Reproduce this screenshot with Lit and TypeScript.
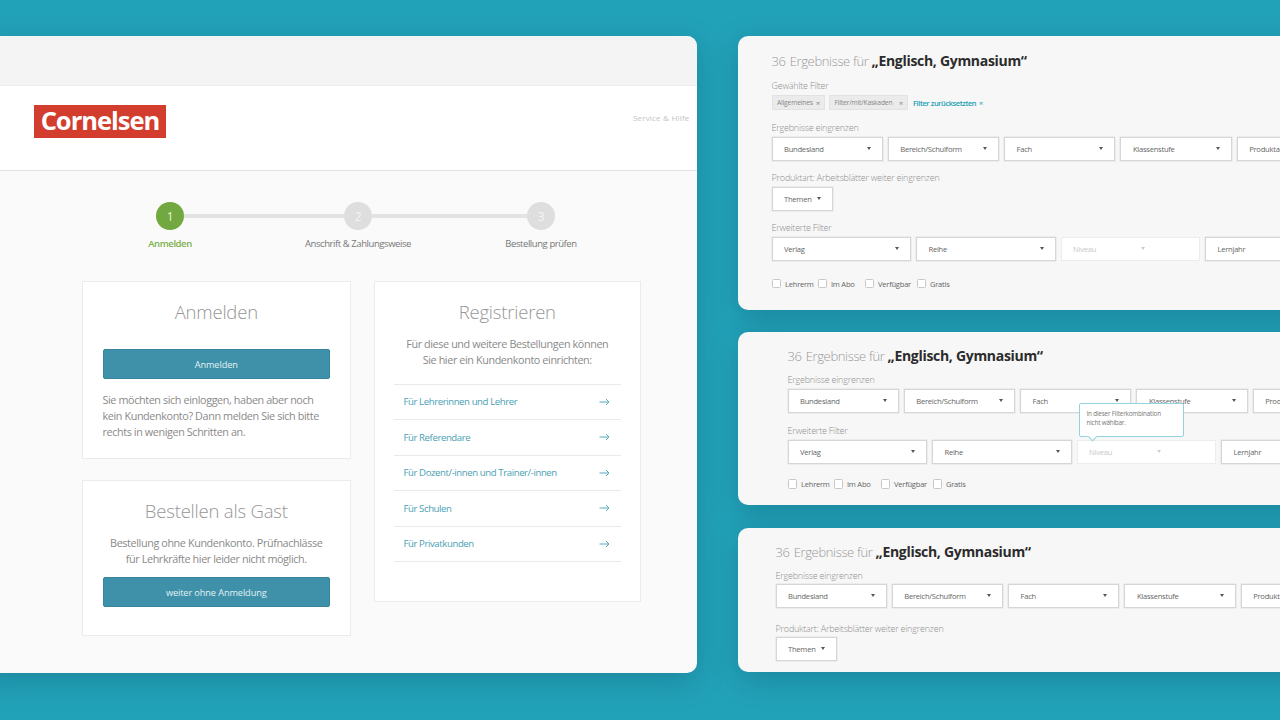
import { LitElement, html, css } from "lit";
import { customElement } from "lit/decorators.js";

const arrow = () => html`<svg class="arrow" width="11" height="8" viewBox="0 0 11 8" fill="none" stroke="currentColor" stroke-width="1"><path d="M0.5 4H10M7 1l3 3-3 3"/></svg>`;

@customElement("app-root")
export class AppRoot extends LitElement {
  static styles = css`
    :host { display: block; position: relative; width: 1280px; height: 720px; overflow: hidden; background: #22a2b9; font-family: "Open Sans", "Noto Sans", sans-serif; color: #666; letter-spacing: -.25px; }
    * { box-sizing: border-box; }
    .panel { position: absolute; overflow: hidden; background: #f7f7f7; box-shadow: 0 8px 30px rgba(0,40,60,.22); white-space: nowrap; }
    .shop { left: -20px; top: 36px; width: 716.5px; height: 636.5px; border-radius: 10px; background: #fafafa; padding-left: 20px; }
    .topband { height: 50px; margin-left: -20px; background: #f4f4f4; border-bottom: 1px solid #eee; }
    .header { height: 85px; margin-left: -20px; padding: 19px 7px 0 54px; background: #fff; border-bottom: 1px solid #e2e2e2; display: flex; justify-content: space-between; align-items: flex-start; }
    .logo { width: 132px; height: 33px; background: #d33d2d; color: #fff; font: 700 25.5px/31px "Open Sans", sans-serif; letter-spacing: -1px; text-align: center; }
    .service { margin-top: 7px; font-size: 8px; letter-spacing: .2px; color: #c4c4c4; }
    .stepper { display: grid; grid-template-columns: 28px 160px 28px 155px 28px; grid-template-rows: 28px auto; margin: 31px 0 0 156px; width: 399px; align-items: center; justify-items: center; }
    .dot { width: 28px; height: 28px; border-radius: 50%; background: #dedede; color: #f4f4f4; font-size: 12px; display: flex; align-items: center; justify-content: center; }
    .dot.on { background: #71a83f; color: #e8f2dd; }
    .line { width: 100%; height: 4px; background: #e3e3e3; }
    .slabel { font-size: 9.5px; margin-top: 7px; color: #777; line-height: 14px; letter-spacing: -.43px; }
    .slabel.on { color: #7cb04c; font-weight: 600; }
    .cols { display: flex; gap: 23px; margin: 30px 0 0 82px; align-items: flex-start; }
    .col { display: flex; flex-direction: column; gap: 21px; width: 268.5px; }
    .card { background: #fff; border: 1px solid #ebebeb; padding: 0 19.5px; white-space: normal; }
    h2 { margin: 0; font-weight: 300; font-size: 18.5px; line-height: 26px; color: #969696; text-align: center; letter-spacing: -.2px; }
    .c1 { height: 178px; padding-top: 16.5px; }
    .c2 { height: 156px; padding-top: 17px; }
    .card.reg { width: 267.5px; height: 321px; padding: 17px 19px 0; }
    p { margin: 0; font-size: 10.8px; line-height: 16px; color: #8a8a8a; letter-spacing: -.39px; }
    p.center { text-align: center; }
    .btn { height: 30px; background: #3e91a9; border: 1px solid #37869d; border-radius: 2px; color: #e4f2f5; font-size: 9.2px; letter-spacing: -.1px; display: flex; align-items: center; justify-content: center; }
    .c1 .btn { margin-top: 24.5px; }
    .c1 p { margin-top: 13px; }
    .c2 p { margin-top: 11px; }
    .c2 .btn { margin-top: 10px; }
    .reg p { margin-top: 11px; }
    .list { margin-top: 15.5px; border-top: 1px solid #eaeaea; }
    .row { height: 35.5px; padding: 0 11px 0 10px; border-bottom: 1px solid #eaeaea; display: flex; align-items: center; justify-content: space-between; color: #4a9fb5; font-size: 9.6px; letter-spacing: -.41px; }
    .arrow { color: #5aa9bd; display: block; }

    .res { left: 738px; width: 600px; border-radius: 10px; }
    .r1 { top: 36px; height: 274px; padding: 15px 0 0 33.5px; }
    .r2 { top: 332px; height: 173px; padding: 14px 0 0 49.5px; }
    .r3 { top: 528px; height: 144px; padding: 14px 0 0 37.5px; }
    .title { height: 19px; font-size: 13px; font-weight: 300; color: #999; display: flex; align-items: center; letter-spacing: -.35px; }
    .title span { margin-right: 4px; }
    .title span + span { margin-right: 3px; }
    .title b { font-size: 14px; font-weight: 700; color: #2b2b2b; letter-spacing: -.3px; }
    .lab { font-size: 9px; font-weight: 300; color: #8f8f8f; height: 12px; line-height: 12px; letter-spacing: -.22px; }
    .r1 .l1 { margin-top: 10px; }
    .chips { display: flex; align-items: center; gap: 4px; margin-top: 3px; height: 15px; font-size: 6.8px; letter-spacing: -.22px; }
    .chip { width: 53.5px; height: 15px; background: #ebebeb; border: 1px solid #e2e2e2; color: #888; display: flex; align-items: center; justify-content: space-between; padding: 0 4px 0 4.5px; }
    .chip.wide { width: 79px; }
    .chip i, .reset i { font-style: normal; font-size: 8px; }
    .reset { color: #25a0b5; margin-left: 1px; font-size: 7.5px; font-weight: 600; letter-spacing: -.42px; }
    .reset i { margin-left: 1px; font-weight: 400; }
    .dd-row { display: flex; gap: 5px; margin-top: 2.5px; }
    .dd { flex: none; height: 24px; background: #fff; border: 1px solid #d6d6d6; box-shadow: 0 0 0 .5px #e2e2e2; padding: 0 11px 0 11.5px; display: flex; align-items: center; justify-content: space-between; font-size: 7.6px; color: #666; letter-spacing: -.25px; }
    .dd::after { content: ""; border: 2.5px solid transparent; border-top: 3.5px solid #555; border-bottom: 0; }
    .dd.off { border-color: #ececec; box-shadow: none; color: #c8c8c8; padding-right: 54px; }
    .dd.off::after { border-top-color: #ccc; }
    .sp1 { margin-top: 11.5px; }
    .r1 .s0 { margin-top: 12px; }
    .r2 .sp1 { margin-top: 12.5px; }
    .r3 .sp1 { margin-top: 15.5px; }
    .r3 .dd-row { margin-top: 1.5px; }
    .top { margin-top: 9px; }
    .checks { display: flex; margin-top: 18px; font-size: 7.6px; color: #666; letter-spacing: -.25px; }
    .r2 .checks { margin-top: 15.5px; }
    .ck { display: flex; align-items: center; }
    .ck i { width: 9.5px; height: 9.5px; border: 1px solid #c8c8c8; border-radius: 1.5px; background: #fff; margin-right: 4px; }
    .tip { position: absolute; left: 340.5px; top: 71px; width: 105px; height: 34px; background: #fff; border: 1px solid #93d2df; border-radius: 2px; padding: 5px 7px; font-size: 6.3px; line-height: 9px; color: #777; z-index: 2; white-space: normal; letter-spacing: -.17px; }
    .tip::after { content: ""; position: absolute; left: 9px; bottom: -4px; width: 6px; height: 6px; background: #fff; border: solid #93d2df; border-width: 0 1px 1px 0; transform: rotate(45deg); }
  `;

  dd(label: string, w: number, off = false) {
    return html`<div class="dd ${off ? "off" : ""}" style="width:${w}px">${label}</div>`;
  }
  filters() {
    return html`<div class="dd-row">${["Bundesland", "Bereich/Schulform", "Fach", "Klassenstufe", "Produktart"].map((l) => this.dd(l, 111.3))}</div>`;
  }
  ext() {
    return html`<div class="dd-row">${this.dd("Verlag", 139.5)}${this.dd("Reihe", 139.5)}${this.dd("Niveau", 139.5, true)}${this.dd("Lernjahr", 139.5)}</div>`;
  }
  checks() {
    const items: [string, number][] = [["Lehrerm", 46], ["Im Abo", 47], ["Verfügbar", 52], ["Gratis", 40]];
    return html`<div class="checks">${items.map(([t, w]) => html`<label class="ck" style="width:${w}px"><i></i>${t}</label>`)}</div>`;
  }
  title() {
    return html`<div class="title"><span>36</span><span>Ergebnisse für</span><b>„Englisch, Gymnasium“</b></div>`;
  }

  render() {
    const links = ["Für Lehrerinnen und Lehrer", "Für Referendare", "Für Dozent/-innen und Trainer/-innen", "Für Schulen", "Für Privatkunden"];
    return html`
      <section class="panel shop">
        <div class="topband"></div>
        <div class="header"><div class="logo">Cornelsen</div><div class="service">Service &amp; Hilfe</div></div>
        <div class="stepper">
          <div class="dot on">1</div><div class="line"></div><div class="dot">2</div><div class="line"></div><div class="dot">3</div>
          <div class="slabel on">Anmelden</div><div></div><div class="slabel">Anschrift &amp; Zahlungsweise</div><div></div><div class="slabel">Bestellung prüfen</div>
        </div>
        <div class="cols">
          <div class="col">
            <div class="card c1">
              <h2>Anmelden</h2>
              <div class="btn">Anmelden</div>
              <p>Sie möchten sich einloggen, haben aber noch<br>kein Kundenkonto? Dann melden Sie sich bitte<br>rechts in wenigen Schritten an.</p>
            </div>
            <div class="card c2">
              <h2>Bestellen als Gast</h2>
              <p class="center">Bestellung ohne Kundenkonto. Prüfnachlässe<br>für Lehrkräfte hier leider nicht möglich.</p>
              <div class="btn">weiter ohne Anmeldung</div>
            </div>
          </div>
          <div class="card reg">
            <h2>Registrieren</h2>
            <p class="center">Für diese und weitere Bestellungen können<br>Sie hier ein Kundenkonto einrichten:</p>
            <div class="list">${links.map((l) => html`<div class="row">${l}${arrow()}</div>`)}</div>
          </div>
        </div>
      </section>

      <section class="panel res r1">
        ${this.title()}
        <div class="lab l1">Gewählte Filter</div>
        <div class="chips">
          <div class="chip">Allgemeines <i>×</i></div><div class="chip wide">Filter/mit/Kaskaden <i>×</i></div><div class="reset">Filter zurücksetzten <i>×</i></div>
        </div>
        <div class="lab s0">Ergebnisse eingrenzen</div>
        ${this.filters()}
        <div class="lab sp1">Produktart: Arbeitsblätter weiter eingrenzen</div>
        <div class="dd-row">${this.dd("Themen", 61)}</div>
        <div class="lab sp1">Erweiterte Filter</div>
        ${this.ext()}
        ${this.checks()}
      </section>

      <section class="panel res r2">
        ${this.title()}
        <div class="lab top">Ergebnisse eingrenzen</div>
        ${this.filters()}
        <div class="lab sp1">Erweiterte Filter</div>
        ${this.ext()}
        ${this.checks()}
        <div class="tip">In dieser Filterkombination nicht wählbar.</div>
      </section>

      <section class="panel res r3">
        ${this.title()}
        <div class="lab top">Ergebnisse eingrenzen</div>
        ${this.filters()}
        <div class="lab sp1">Produktart: Arbeitsblätter weiter eingrenzen</div>
        <div class="dd-row">${this.dd("Themen", 61)}</div>
      </section>
    `;
  }
}
